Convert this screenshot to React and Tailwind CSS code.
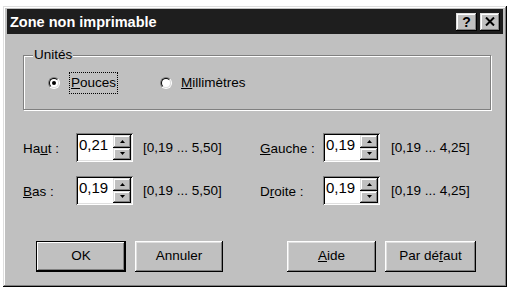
import React from "react";

const raised =
  "shadow-[inset_-1px_-1px_#000,inset_1px_1px_#fff,inset_-2px_-2px_#808080,inset_2px_2px_#dfdfdf]";
const raisedSmall =
  "shadow-[inset_-1px_-1px_#000,inset_1px_1px_#dfdfdf,inset_-2px_-2px_#808080,inset_2px_2px_#fff]";
const sunken =
  "shadow-[inset_1px_1px_#808080,inset_-1px_-1px_#fff,inset_2px_2px_#000,inset_-2px_-2px_#dfdfdf]";

function Radio({ checked }) {
  return (
    <div className="w-[12px] h-[12px] rounded-full border border-t-[#808080] border-l-[#808080] border-b-white border-r-white shrink-0">
      <div className="w-full h-full rounded-full border border-t-black border-l-black border-b-[#dfdfdf] border-r-[#dfdfdf] bg-white flex items-center justify-center">
        {checked && <div className="w-[4px] h-[4px] rounded-full bg-black" />}
      </div>
    </div>
  );
}

function Arrow({ up }) {
  return (
    <svg width="5" height="3" viewBox="0 0 5 3">
      {up ? <polygon points="0,3 5,3 2.5,0" fill="#000" /> : <polygon points="0,0 5,0 2.5,3" fill="#000" />}
    </svg>
  );
}

function Spin({ value }) {
  return (
    <div className={`w-[57px] h-[29px] bg-white p-[2px] flex ${sunken}`}>
      <div className="flex-1 text-[15px] leading-[18px] pl-[1px] pt-[1px] text-black">{value}</div>
      <div className="w-[18px] flex flex-col">
        <div className={`flex-1 bg-[#c0c0c0] flex items-center justify-center ${raisedSmall}`}>
          <Arrow up />
        </div>
        <div className={`flex-1 bg-[#c0c0c0] flex items-center justify-center ${raisedSmall}`}>
          <Arrow />
        </div>
      </div>
    </div>
  );
}

function Row({ l1, spin1, r1, l2, spin2, r2 }) {
  return (
    <div className="flex items-center h-[29px]">
      <div className="w-[53px] pt-[3px]">{l1}</div>
      <Spin value={spin1} />
      <div className="w-[117px] ml-[10px] pt-[2px]">{r1}</div>
      <div className="w-[63px] pt-[3px]">{l2}</div>
      <Spin value={spin2} />
      <div className="ml-[11px] pt-[2px]">{r2}</div>
    </div>
  );
}

export default function App() {
  return (
    <div
      className="w-[515px] h-[290px] bg-white pt-[6px] pl-[3px] text-[13.5px] text-black"
      style={{ fontFamily: '"Liberation Sans", Arial, sans-serif' }}
    >
      <div className="w-[504px] h-[281px] bg-[#c0c0c0] shadow-[inset_-1px_-1px_#000,inset_1px_1px_#dfdfdf,inset_-2px_-2px_#808080,inset_2px_2px_#fff] pt-[3px] px-[4px] flex flex-col">
        <div className="h-[25px] bg-[#1e1e1e] flex items-center pl-[3px] pr-[3px]">
          <div className="text-white font-bold text-[14.5px] flex-1 leading-none pt-[1px]">Zone non imprimable</div>
          <div className={`w-[21px] h-[18px] bg-[#c0c0c0] flex items-center justify-center font-bold text-[14px] leading-none ${raisedSmall}`}>
            ?
          </div>
          <div className={`w-[20px] h-[18px] ml-[3px] bg-[#c0c0c0] flex items-center justify-center ${raisedSmall}`}>
            <svg width="10" height="9" viewBox="0 0 10 9">
              <path d="M1 0.5 L9 8.5 M9 0.5 L1 8.5" stroke="#000" strokeWidth="2" />
            </svg>
          </div>
        </div>

        <div className="ml-[16px] mt-[21px] w-[468px] h-[55px] relative border border-[#808080] shadow-[inset_1px_1px_#fff,1px_1px_#fff]">
          <div className="absolute left-[9px] -top-[9px] px-[1px] bg-[#c0c0c0] leading-[16px]">Unités</div>
          <div className="flex items-center h-[22px] mt-[16px] pl-[24px]">
            <Radio checked />
            <div className="ml-[9px] px-[1px] h-[22px] flex items-center border border-dotted border-black leading-[16px]">
              <span><u>P</u>ouces</span>
            </div>
            <div className="ml-[42px]">
              <Radio />
            </div>
            <div className="ml-[8px] px-[1px] leading-[16px]">
              <u>M</u>illimètres
            </div>
          </div>
        </div>

        <div className="ml-[16px] mt-[23px] flex flex-col gap-[14px]">
          <Row
            l1={<span>Ha<u>u</u>t :</span>}
            spin1="0,21"
            r1="[0,19 ... 5,50]"
            l2={<span><u>G</u>auche :</span>}
            spin2="0,19"
            r2="[0,19 ... 4,25]"
          />
          <Row
            l1={<span><u>B</u>as :</span>}
            spin1="0,19"
            r1="[0,19 ... 5,50]"
            l2={<span>D<u>r</u>oite :</span>}
            spin2="0,19"
            r2="[0,19 ... 4,25]"
          />
        </div>

        <div className="flex mt-[36px] ml-[29px] h-[31px]">
          <div className="w-[90px] h-full flex items-center justify-center shadow-[inset_0_0_0_1px_#000,inset_-2px_-2px_#000,inset_2px_2px_#fff,inset_-3px_-3px_#808080]">
            OK
          </div>
          <div className={`w-[88px] ml-[9px] h-full flex items-center justify-center ${raised}`}>Annuler</div>
          <div className={`w-[89px] ml-[64px] h-full flex items-center justify-center ${raised}`}>
            <span><u>A</u>ide</span>
          </div>
          <div className={`w-[91px] ml-[9px] h-full flex items-center justify-center ${raised}`}>
            <span>Par dé<u>f</u>aut</span>
          </div>
        </div>
      </div>
    </div>
  );
}
